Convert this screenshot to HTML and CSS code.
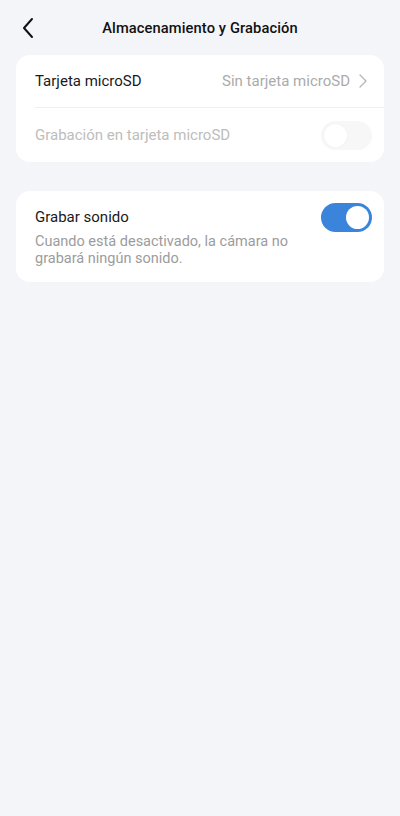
FILE: index.html
```html
<!DOCTYPE html>
<html lang="es">
<head>
<meta charset="utf-8">
<link rel="stylesheet" href="styles.css">
</head>
<body>
<header class="topbar">
  <svg class="back" width="14" height="22" viewBox="0 0 14 22"><path d="M11 2 L3 11 L11 20" fill="none" stroke="#111" stroke-width="2" stroke-linecap="round" stroke-linejoin="round"/></svg>
  <h1 class="title">Almacenamiento y Grabación</h1>
</header>
<main class="content">
  <section class="card">
    <div class="row row-link">
      <span class="label">Tarjeta microSD</span>
      <span class="value">Sin tarjeta microSD
        <svg class="chev" width="8" height="14" viewBox="0 0 8 14"><path d="M1 1 L7 7 L1 13" fill="none" stroke="#b5b5b5" stroke-width="1.3" stroke-linecap="round" stroke-linejoin="round"/></svg>
      </span>
    </div>
    <div class="row row-disabled">
      <span class="label muted">Grabación en tarjeta microSD</span>
      <span class="switch switch-off"><span class="knob"></span></span>
    </div>
  </section>
  <section class="card card-sound">
    <div class="sound-text">
      <div class="label">Grabar sonido</div>
      <p class="desc">Cuando está desactivado, la cámara no grabará ningún sonido.</p>
    </div>
    <span class="switch switch-on"><span class="knob"></span></span>
  </section>
</main>
</body>
</html>
```
FILE: styles.css
```css
* { box-sizing: border-box; }
html, body { margin: 0; padding: 0; }
body {
  background: #f4f5f9;
  font-family: Roboto, "Noto Sans", sans-serif;
  width: 400px;
  min-height: 816px;
  color: #111;
}
.topbar {
  position: relative;
  height: 55px;
  display: flex;
  align-items: center;
  justify-content: center;
}
.back {
  position: absolute;
  left: 21px;
  top: 17px;
}
.title {
  margin: 0;
  font-size: 14.7px;
  font-weight: 500;
  color: #111;
  letter-spacing: 0.1px;
}
.content {
  padding: 0 16px;
  display: flex;
  flex-direction: column;
  gap: 29px;
}
.card {
  background: #fff;
  border-radius: 14px;
}
.row {
  display: flex;
  align-items: center;
  justify-content: space-between;
  margin-left: 19px;
  padding-right: 12px;
}
.row-link {
  height: 53px;
  border-bottom: 1px solid #f0f0f2;
  padding-right: 17px;
}
.row-disabled {
  height: 54px;
}
.label {
  font-size: 15px;
  color: #1a1a1a;
}
.muted { color: #bdbdbd; }
.value {
  display: flex;
  align-items: center;
  gap: 9px;
  font-size: 15px;
  color: #ababab;
}
.switch {
  position: relative;
  width: 51px;
  height: 29px;
  border-radius: 15px;
  flex: none;
}
.switch .knob {
  position: absolute;
  top: 3px;
  width: 23px;
  height: 23px;
  border-radius: 50%;
  background: #fff;
}
.switch-off {
  background: #f7f7f8;
}
.switch-off .knob {
  left: 3px;
  box-shadow: 0 0 2px rgba(0,0,0,0.06);
}
.switch-on {
  background: #3a84dc;
}
.switch-on .knob {
  right: 3px;
}
.card-sound {
  display: flex;
  align-items: flex-start;
  justify-content: space-between;
  padding: 12px 12px 15px 19px;
}
.sound-text {
  padding-top: 3px;
}
.sound-text .label {
  line-height: 22px;
}
.desc {
  margin: 5px 0 0;
  font-size: 14.5px;
  line-height: 17px;
  color: #9c9c9c;
  width: 270px;
}
```
